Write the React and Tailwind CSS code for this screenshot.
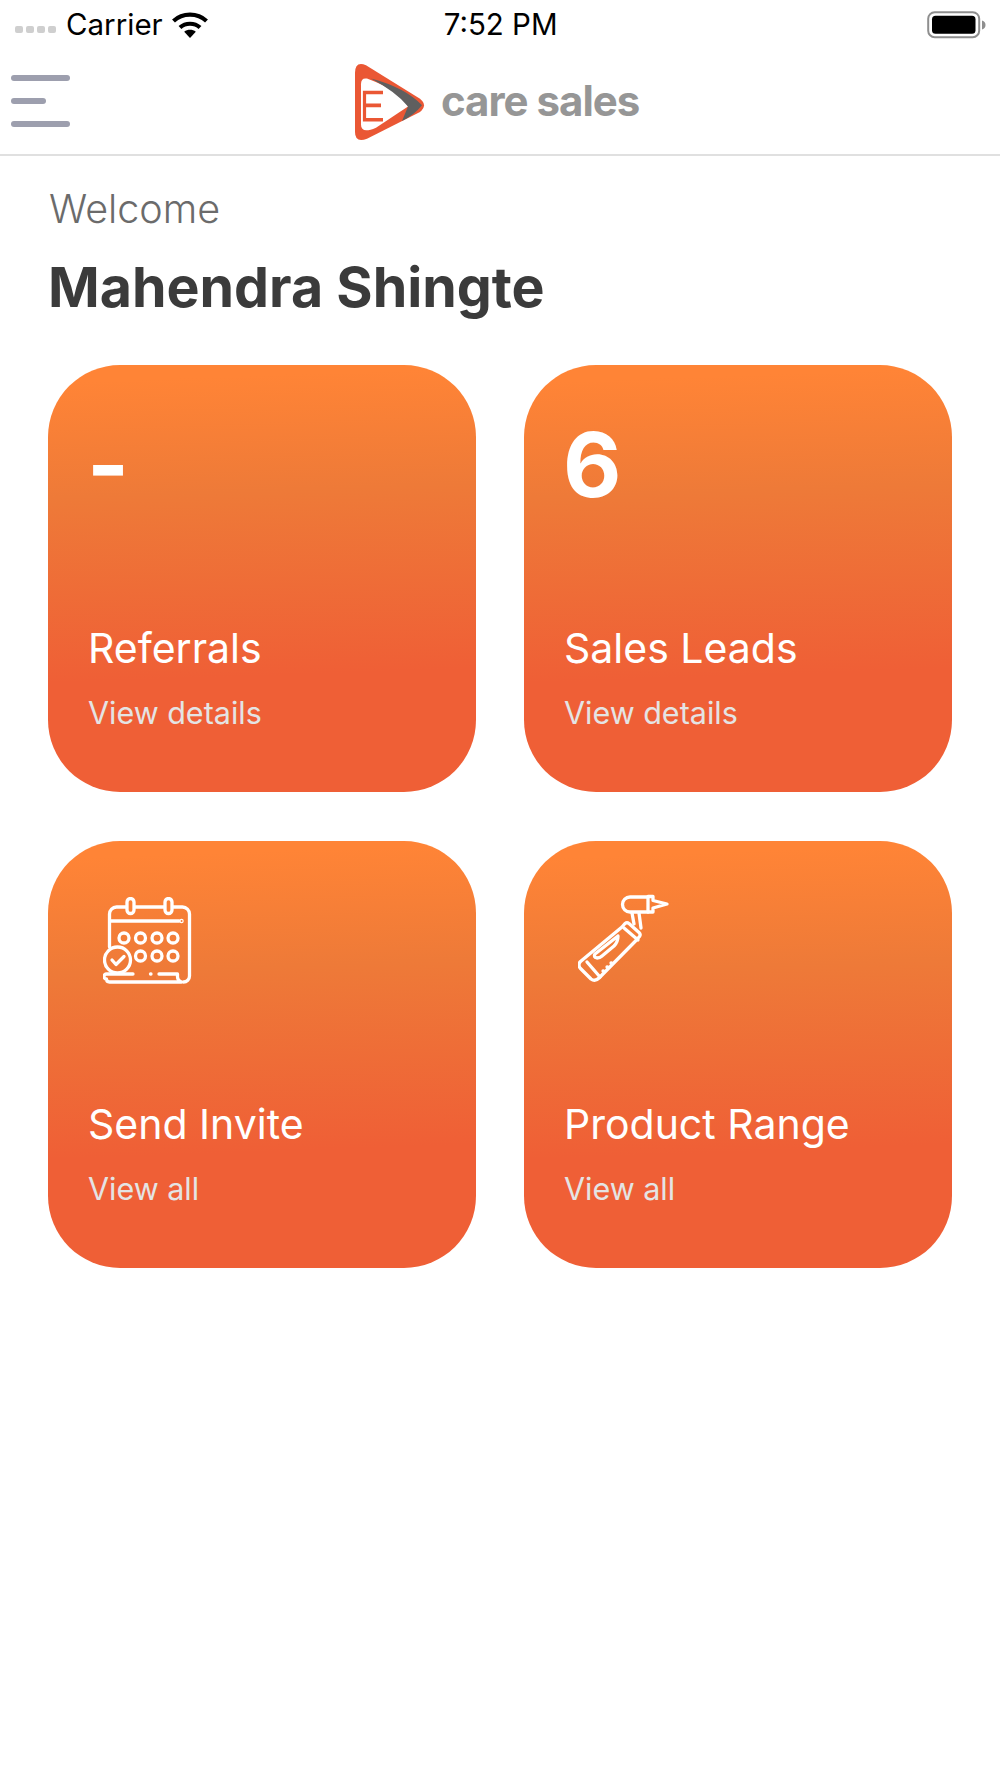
const font = { fontFamily: 'Inter, "Liberation Sans", sans-serif' };

function Wifi() {
  return (
    <svg width="38" height="28" viewBox="0 0 38 28" fill="none" stroke="#000" strokeWidth="4.2">
      <path d="M2.5 10C11.5 1.5 26.5 1.5 35.5 10" />
      <path d="M9 16.5C14.5 11.5 23.5 11.5 29 16.5" />
      <path d="M19 27l-5.8-6.2c3.2-2.6 8.4-2.6 11.6 0z" fill="#000" stroke="none" />
    </svg>
  );
}

function Battery() {
  return (
    <svg width="60" height="28" viewBox="0 0 60 28">
      <rect x="1.2" y="1.2" width="51" height="25" rx="6.5" fill="none" stroke="#8e8e8e" strokeWidth="2" />
      <rect x="5" y="4.8" width="43.5" height="18" rx="3.5" fill="#000" />
      <path d="M55 9.5c2.5.8 3.5 2.5 3.5 4.5s-1 3.7-3.5 4.5z" fill="#8e8e8e" />
    </svg>
  );
}

function Logo() {
  return (
    <svg width="72" height="78" viewBox="14 13 72 70" preserveAspectRatio="none">
      <path d="M15 22Q15 11 26 15L80 45Q88 51 80 57L27 81Q15 85 15 75Z" fill="#ea5734" />
      <path d="M21 32Q21 26 27 27Q60 38 68 52L36 71Q21 77 21 68Z" fill="#fff" />
      <path d="M31 27Q65 35 82 51Q74 60 62 65L68 52Q56 39 31 27Z" fill="#5f5f5f" />
      <path d="M43 39.5H24.5V64H43M24.5 51H41" fill="none" stroke="#ea5734" strokeWidth="3.2" />
    </svg>
  );
}

function CalendarIcon() {
  return (
    <svg width="90" height="92" viewBox="14 15 90 92" fill="none" stroke="#fff" strokeWidth="3.3" strokeLinecap="round" strokeLinejoin="round">
      <path d="M20.5 65V32a7 7 0 0 1 7-7h66a7 7 0 0 1 7 7v62a6 6 0 0 1-6 6" />
      <path d="M22 39h68" />
      <circle cx="92.5" cy="39" r="0.6" />
      <rect x="38" y="16.5" width="7" height="15" rx="3.5" fill="#f98137" />
      <rect x="76" y="16.5" width="7" height="15" rx="3.5" fill="#f98137" />
      <circle cx="35" cy="56" r="5" />
      <circle cx="51.5" cy="56" r="5" />
      <circle cx="68" cy="56" r="5" />
      <circle cx="84" cy="56" r="5" />
      <circle cx="51.5" cy="74" r="5" />
      <circle cx="68" cy="74" r="5" />
      <circle cx="84" cy="74" r="5" />
      <circle cx="28.5" cy="78" r="13" />
      <path d="M23 78l4 4.5 8-8" />
      <path d="M44 92H17.5a2.5 2.5 0 0 0 0 5c0 2 1 3 3 3h72a6 6 0 0 1-4-6V92H70" />
      <path d="M61.5 92h.5" />
    </svg>
  );
}

function ToolIcon() {
  return (
    <svg width="92" height="92" viewBox="13 13 92 92" fill="none" stroke="#fff" strokeWidth="3.3" strokeLinecap="round" strokeLinejoin="round">
      <path d="M83 17H65a7.5 7.5 0 0 0 0 15h18z" />
      <path d="M83 16.5h5v4l14 3.5-14 4v4h-5" />
      <path d="M67 33l2 11M74 33l2 15" />
      <path d="M57 47l3-3.5q2-1.5 4 0l10 9q2 2 .5 4l-3 3.5L34 98q-4 4-8 1L16 89q-4-4-.5-7.500z" />
      <path d="M22 82l13 15" />
      <path d="M59 48l14 12" />
      <path d="M53 56L30 74q-2 3 2 4q3 0 5-2l12-10q4-4 4-10" />
      <path d="M46 83h.5M42 87h.5M38 91h.5" />
    </svg>
  );
}

function Card({ value, icon, title, link }) {
  return (
    <div className="h-[427px] rounded-[72px] bg-[linear-gradient(178deg,#ff8436_4%,#ee7a38_30%,#ef5f36_72%)] pl-10 text-white">
      <div className="flex h-[259px] items-start">
        {value && <div className="-ml-[1px] pt-[45px] text-[90px] leading-[109px] font-bold">{value}</div>}
        {icon}
      </div>
      <div className="text-[41px] leading-[48px]">{title}</div>
      <div className="mt-[23px] text-[30.5px] leading-[36px] text-[#e4e4e4]">{link}</div>
    </div>
  );
}

export default function App() {
  return (
    <div className="min-h-[1778px] bg-white" style={font}>
      {/* status bar */}
      <div className="flex h-[49px] items-center pr-[13px] pl-[15px] text-[29.5px] text-black">
        <div className="mt-[9px] flex gap-[3px]">
          <span className="h-[7px] w-[8px] rounded-[2px] bg-[#cfcfcf]" />
          <span className="h-[7px] w-[8px] rounded-[2px] bg-[#cfcfcf]" />
          <span className="h-[7px] w-[8px] rounded-[2px] bg-[#cfcfcf]" />
          <span className="h-[7px] w-[8px] rounded-[2px] bg-[#cfcfcf]" />
        </div>
        <span className="ml-[10px]">Carrier</span>
        <span className="ml-[8px]"><Wifi /></span>
        <span className="ml-[235px]">7:52 PM</span>
        <span className="ml-auto"><Battery /></span>
      </div>

      {/* nav */}
      <div className="flex h-[107px] items-center border-b-2 border-[#e0e0e0] pb-[2px]">
        <div className="ml-[11px] flex w-[59px] flex-col gap-[17px]">
          <span className="h-[6px] w-[59px] rounded-full bg-[#9d9fae]" />
          <span className="h-[6px] w-[35px] rounded-full bg-[#9d9fae]" />
          <span className="h-[6px] w-[59px] rounded-full bg-[#9d9fae]" />
        </div>
        <div className="ml-[284px] flex items-center">
          <div className="pt-[2px]"><Logo /></div>
          <span className="ml-[15px] text-[42px] font-bold tracking-[-1px] text-[#969696]">care sales</span>
        </div>
      </div>

      <div className="px-12">
        <div className="pt-[29px] pl-[1px] text-[39.5px] leading-[48px] font-light text-[#6b6b6b]">Welcome</div>
        <div className="mt-[20px] text-[55.5px] leading-[68px] font-bold text-[#3b3b3b]">Mahendra Shingte</div>

        <div className="mt-[44px] grid grid-cols-2 gap-x-12 gap-y-[49px]">
          <Card value="-" title="Referrals" link="View details" />
          <Card value="6" title="Sales Leads" link="View details" />
          <Card icon={<div className="pt-[56px] pl-[15px]"><CalendarIcon /></div>} title="Send Invite" link="View all" />
          <Card icon={<div className="pt-[52px] pl-[14px]"><ToolIcon /></div>} title="Product Range" link="View all" />
        </div>
      </div>
    </div>
  );
}
